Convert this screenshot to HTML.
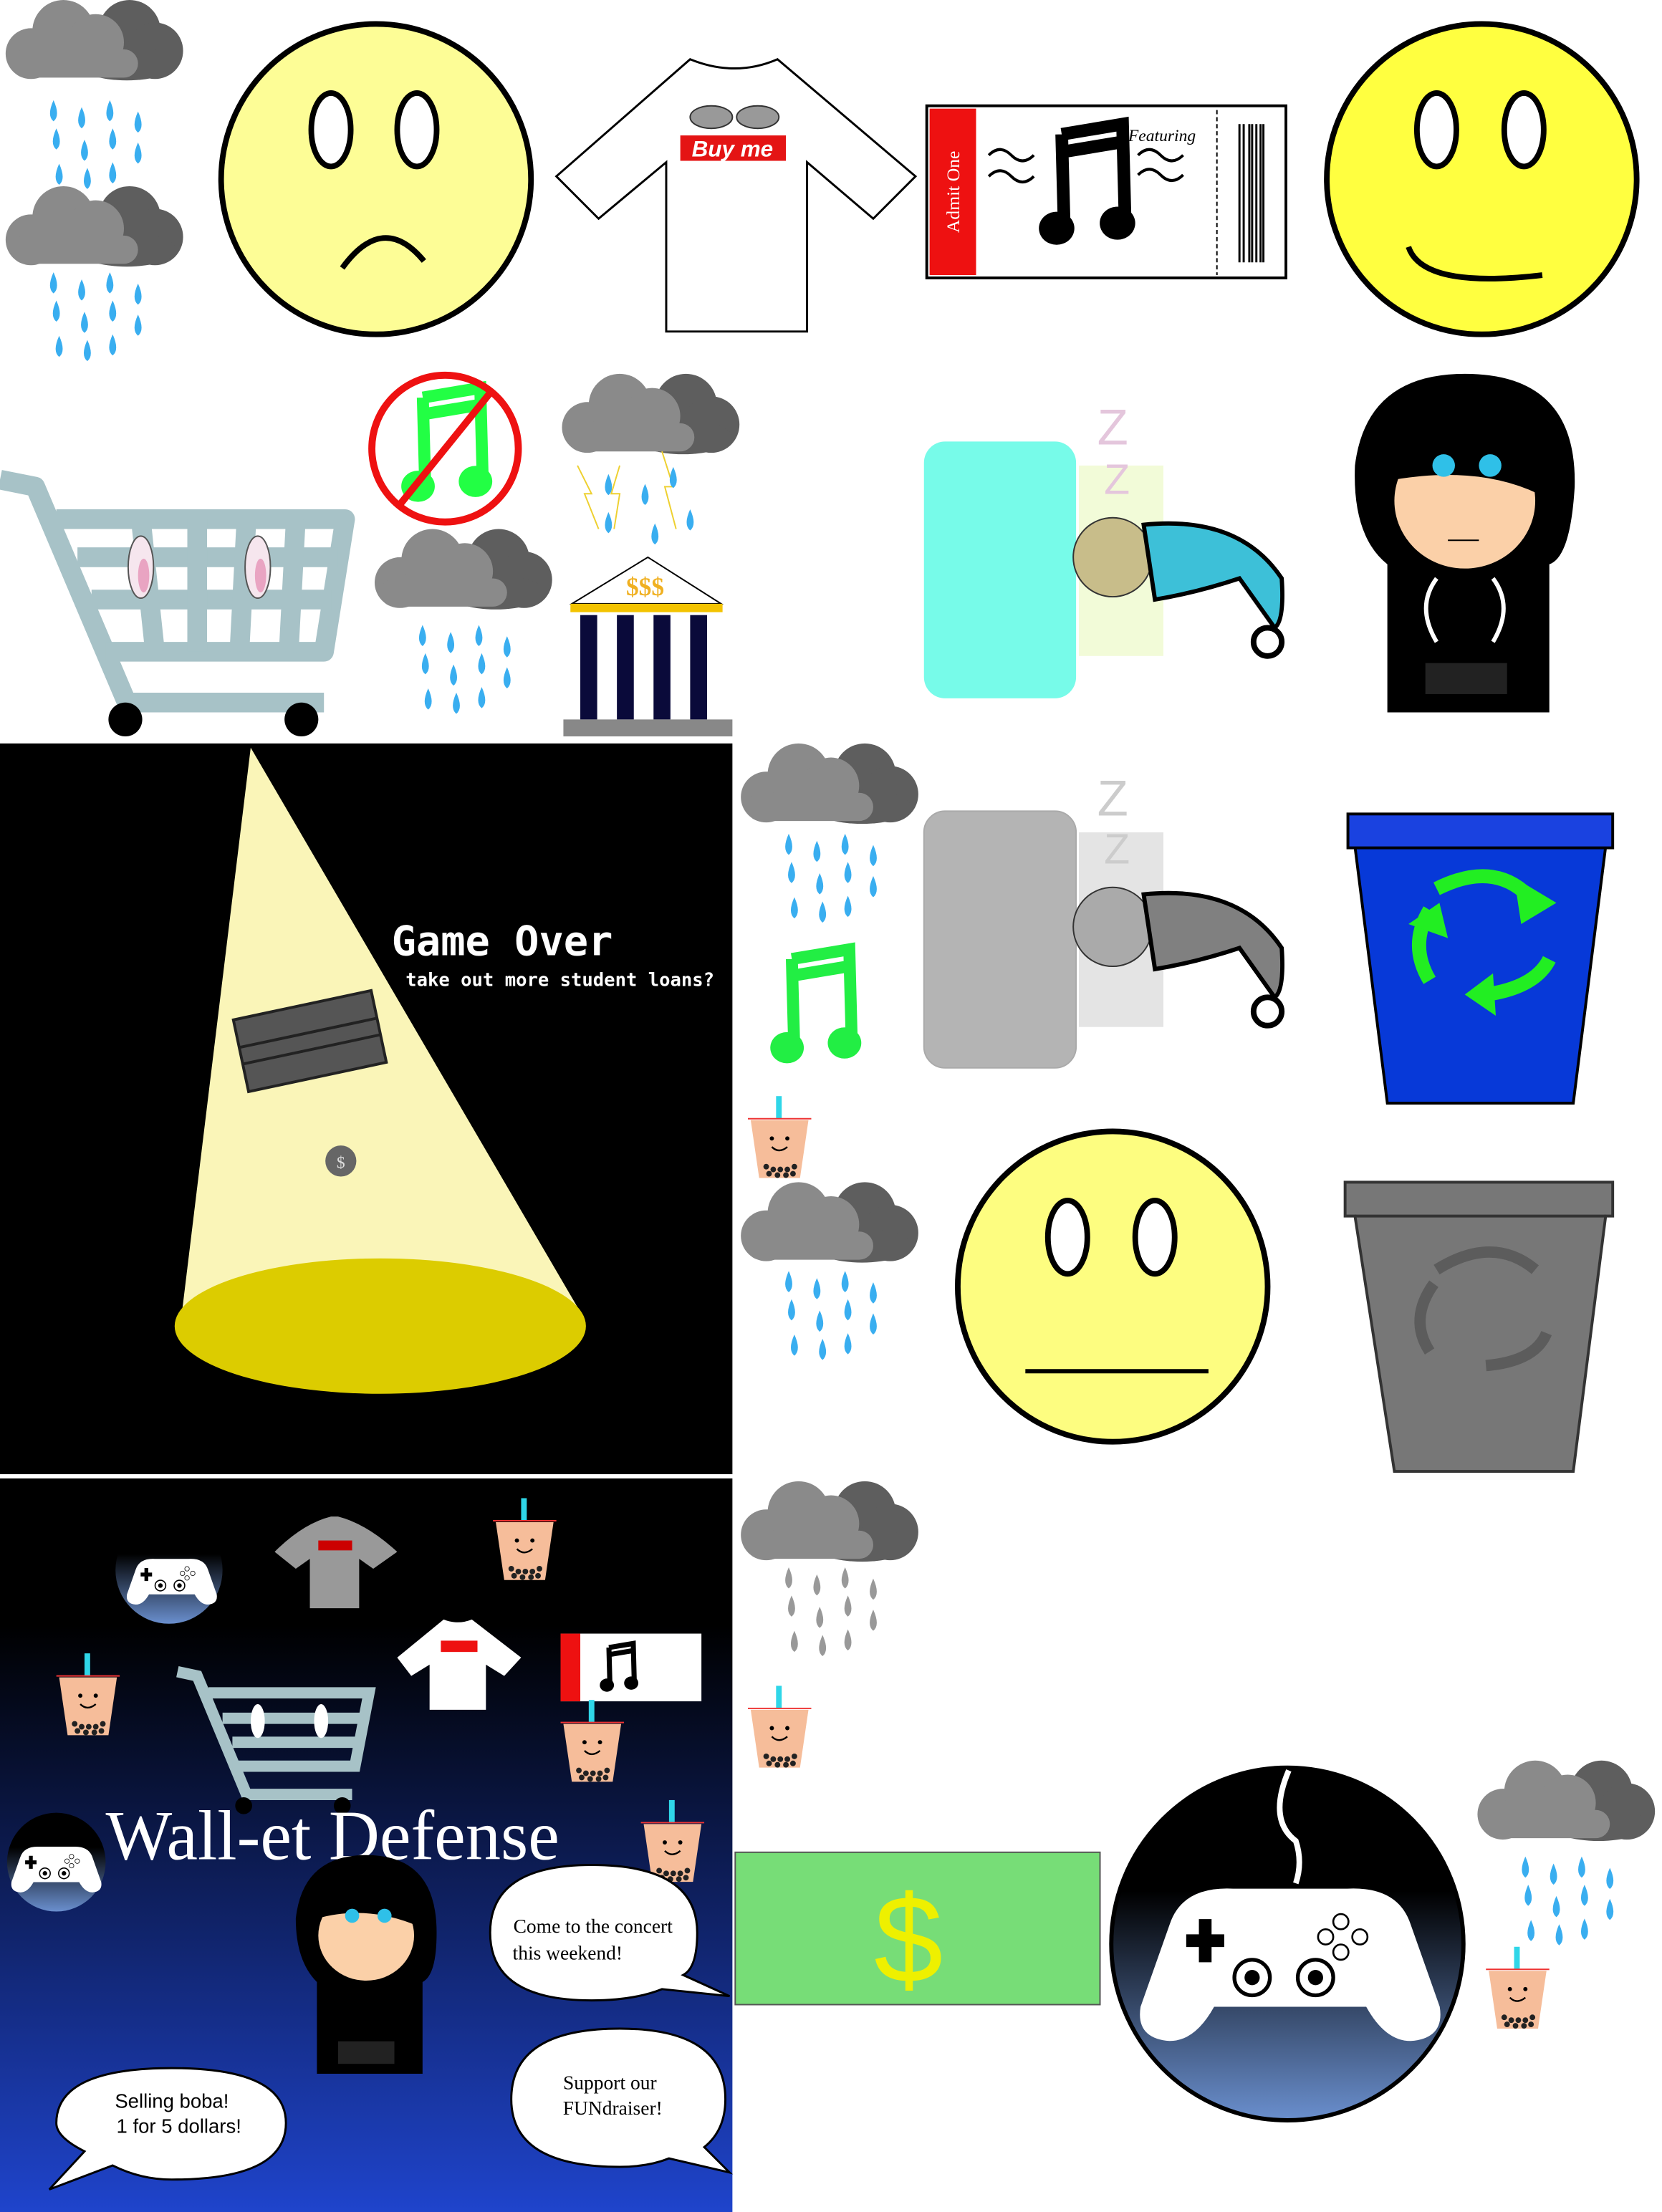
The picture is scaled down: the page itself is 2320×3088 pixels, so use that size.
<!DOCTYPE html>
<html><head><meta charset="utf-8"><style>
html,body{margin:0;padding:0;background:#fff;}
svg{display:block;}
</style></head><body>
<svg width="2320" height="3088" viewBox="0 0 1180 1568" preserveAspectRatio="none" xmlns="http://www.w3.org/2000/svg" style="font-family:'Liberation Serif',serif">
<defs>
<g id="cloud">
 <circle cx="92" cy="22" r="22" fill="#5e5e5e"/>
 <circle cx="110" cy="36" r="20" fill="#5e5e5e"/>
 <ellipse cx="90" cy="45" rx="35" ry="12" fill="#5e5e5e"/>
 <circle cx="22" cy="38" r="18" fill="#8a8a8a"/>
 <circle cx="45" cy="22" r="22" fill="#8a8a8a"/>
 <circle cx="68" cy="30" r="20" fill="#8a8a8a"/>
 <rect x="8" y="35" width="90" height="20" rx="10" fill="#8a8a8a"/>
</g>
<path id="drop" d="M0,-9 Q5,2 0,6 Q-5,2 0,-9Z"/>
<g id="dropsA">
 <use href="#drop" x="38" y="80"/><use href="#drop" x="58" y="85"/><use href="#drop" x="78" y="80"/><use href="#drop" x="98" y="88"/>
 <use href="#drop" x="40" y="100"/><use href="#drop" x="60" y="108"/><use href="#drop" x="80" y="100"/><use href="#drop" x="98" y="110"/>
 <use href="#drop" x="42" y="125"/><use href="#drop" x="62" y="128"/><use href="#drop" x="80" y="124"/>
</g>
<g id="rain" fill="#39aef0"><use href="#dropsA"/></g>
<g id="grayrain" fill="#999"><use href="#dropsA"/></g>
<g id="boba">
 <rect x="20" y="0" width="4" height="16" fill="#2fd6e8"/>
 <line x1="0" y1="16" x2="45" y2="16" stroke="#e33" stroke-width="1"/>
 <path d="M2,17 L43,17 L37,58 L8,58Z" fill="#f6bd9a"/>
 <circle cx="17" cy="30" r="1.5"/><circle cx="28" cy="30" r="1.5"/>
 <path d="M17,36 Q22,41 28,36" fill="none" stroke="#000" stroke-width="1.2"/>
 <g fill="#222"><circle cx="13" cy="50" r="2"/><circle cx="18" cy="52" r="2"/><circle cx="23" cy="52" r="2"/><circle cx="28" cy="52" r="2"/><circle cx="33" cy="50" r="2"/><circle cx="15" cy="55" r="2"/><circle cx="21" cy="56" r="2"/><circle cx="27" cy="56" r="2"/><circle cx="32" cy="55" r="2"/></g>
</g>
<g id="note">
 <path d="M12,8 L60,0 L62,76 M12,8 L14,82 M12,22 L60,14" fill="none" stroke="currentColor" stroke-width="10"/>
 <ellipse cx="8" cy="82" rx="14" ry="13" fill="currentColor"/>
 <ellipse cx="56" cy="78" rx="14" ry="13" fill="currentColor"/>
</g>
<g id="controller">
 <path d="M-95,-20 Q-85,-50 -45,-48 L45,-48 Q85,-50 95,-20 L118,45 Q122,70 95,72 Q75,72 60,45 L-60,45 Q-75,72 -95,72 Q-122,70 -118,45Z" fill="#fff"/>
 <path d="M-82,-12 h10 v-12 h10 v12 h10 v10 h-10 v12 h-10 v-12 h-10Z" fill="#000"/>
 <circle cx="-30" cy="22" r="14" fill="#fff" stroke="#000" stroke-width="3"/><circle cx="-30" cy="22" r="6"/>
 <circle cx="20" cy="22" r="14" fill="#fff" stroke="#000" stroke-width="3"/><circle cx="20" cy="22" r="6"/>
 <g fill="#fff" stroke="#000" stroke-width="1.5"><circle cx="40" cy="-22" r="6"/><circle cx="55" cy="-10" r="6"/><circle cx="40" cy="2" r="6"/><circle cx="28" cy="-10" r="6"/></g>
</g>
<linearGradient id="ctlg" x1="0" y1="0" x2="0" y2="1"><stop offset="0.35" stop-color="#000"/><stop offset="1" stop-color="#6a8fce"/></linearGradient>
<linearGradient id="bg2" x1="0" y1="0" x2="0" y2="1"><stop offset="0.2" stop-color="#000"/><stop offset="1" stop-color="#1f44cc"/></linearGradient>
</defs>

<use href="#cloud" x="0" y="0"/><use href="#rain" x="0" y="0"/>
<use href="#cloud" x="0" y="132"/><use href="#rain" x="0" y="122"/>

<circle cx="267" cy="127" r="110" fill="#fdfd96" stroke="#000" stroke-width="4"/>
<ellipse cx="235" cy="92" rx="14" ry="26" fill="#fff" stroke="#000" stroke-width="4"/>
<ellipse cx="296" cy="92" rx="14" ry="26" fill="#fff" stroke="#000" stroke-width="4"/>
<path d="M243,190 Q272,150 301,185" fill="none" stroke="#000" stroke-width="4"/>

<path d="M490,42 Q522,55 552,42 L650,125 L620,155 L573,115 L573,235 L473,235 L473,115 L425,155 L395,125Z" fill="#fff" stroke="#000" stroke-width="1.5"/>
<ellipse cx="505" cy="83" rx="15" ry="8" fill="#999" stroke="#333"/><ellipse cx="538" cy="83" rx="15" ry="8" fill="#999" stroke="#333"/>
<rect x="483" y="96" width="75" height="18" fill="#e41414"/>
<text x="520" y="111" style="font-family:'Liberation Sans',sans-serif" font-style="italic" font-weight="bold" font-size="16" fill="#fff" text-anchor="middle">Buy me</text>

<rect x="658" y="75" width="255" height="122" fill="#fff" stroke="#000" stroke-width="2"/>
<rect x="660" y="77" width="33" height="118" fill="#ee1111"/>
<text transform="translate(681,136) rotate(-90)" font-size="13" fill="#fff" text-anchor="middle">Admit One</text>
<g color="#000" transform="translate(743,88) scale(0.9)"><use href="#note"/></g>
<path d="M702,110 q8,-8 16,0 t16,0 M702,125 q8,-8 16,0 t16,0 M808,110 q8,-8 16,0 t16,0 M808,124 q8,-8 16,0 t16,0" fill="none" stroke="#000" stroke-width="2"/>
<text x="825" y="100" font-size="12" text-anchor="middle" font-style="italic">Featuring</text>
<line x1="864" y1="78" x2="864" y2="195" stroke="#000" stroke-dasharray="3,2"/>
<g stroke="#000"><path d="M880,88 v98 M883,88 v98 M887,88 v98 M889,88 v98 M892,88 v98 M895,88 v98 M897,88 v98" stroke-width="1.5"/></g>

<circle cx="1052" cy="127" r="110" fill="#ffff40" stroke="#000" stroke-width="4"/>
<ellipse cx="1020" cy="92" rx="14" ry="26" fill="#fff" stroke="#000" stroke-width="4"/>
<ellipse cx="1082" cy="92" rx="14" ry="26" fill="#fff" stroke="#000" stroke-width="4"/>
<path d="M1000,175 Q1010,205 1095,195" fill="none" stroke="#000" stroke-width="4"/>

<g fill="none" stroke="#a7c2c7" stroke-width="14" stroke-linejoin="round">
 <path d="M0,340 L25,345 L90,498 L230,498"/>
 <path d="M40,368 L245,368 L230,462 L75,462"/>
 <path d="M55,395 L240,395 M65,425 L235,425"/>
 <path d="M100,368 L110,462 M140,368 L140,462 M175,368 L170,462 M210,368 L205,462"/>
</g>
<ellipse cx="100" cy="402" rx="9" ry="22" fill="#f6e6ee" stroke="#555"/><ellipse cx="102" cy="408" rx="4" ry="12" fill="#e9a4c2"/>
<ellipse cx="183" cy="402" rx="9" ry="22" fill="#f6e6ee" stroke="#555"/><ellipse cx="185" cy="408" rx="4" ry="12" fill="#e9a4c2"/>
<circle cx="89" cy="510" r="12" fill="#000"/><circle cx="214" cy="510" r="12" fill="#000"/>

<g color="#22ff44" transform="translate(290,275) scale(0.85)"><use href="#note"/></g>
<circle cx="316" cy="318" r="52" fill="none" stroke="#ee1111" stroke-width="5"/>
<line x1="282" y1="360" x2="350" y2="276" stroke="#ee1111" stroke-width="5"/>
<use href="#cloud" x="262" y="375"/><use href="#rain" x="262" y="372"/>
<use href="#cloud" x="395" y="265"/>
<path d="M410,330 l10,20 -5,0 10,25 M470,320 l8,25 -6,0 8,30 M440,330 l-6,20 6,0 -4,25" fill="none" stroke="#eed030" stroke-width="1"/>
<g fill="#39aef0"><use href="#drop" x="432" y="345"/><use href="#drop" x="458" y="352"/><use href="#drop" x="478" y="340"/><use href="#drop" x="432" y="372"/><use href="#drop" x="490" y="370"/><use href="#drop" x="465" y="380"/></g>
<path d="M460,395 L512,428 L406,428Z" fill="#fff" stroke="#000"/>
<text x="458" y="422" font-size="18" fill="#f0b020" text-anchor="middle" font-weight="bold">$$$</text>
<rect x="405" y="428" width="108" height="6" fill="#f3c300"/>
<rect x="405" y="434" width="108" height="78" fill="#fff"/>
<g fill="#0a0a3a"><rect x="412" y="436" width="12" height="74"/><rect x="438" y="436" width="12" height="74"/><rect x="464" y="436" width="12" height="74"/><rect x="490" y="436" width="12" height="74"/></g>
<rect x="400" y="510" width="120" height="12" fill="#888"/>

<rect x="766" y="330" width="60" height="135" fill="#f2fbd8"/>
<rect x="656" y="313" width="108" height="182" rx="15" fill="#77fbe9"/>
<text x="790" y="315" style="font-family:'Liberation Sans',sans-serif" font-size="36" fill="#e4c6dc" text-anchor="middle">Z</text>
<text x="793" y="350" style="font-family:'Liberation Sans',sans-serif" font-size="30" fill="#e4c6dc" text-anchor="middle">Z</text>
<circle cx="790" cy="395" r="28" fill="#c8bd8a" stroke="#333"/>
<path d="M812,372 Q880,365 910,410 Q912,440 905,445 L880,410 Q850,420 820,425Z" fill="#3dc0d8" stroke="#000" stroke-width="3"/>
<circle cx="900" cy="455" r="10" fill="#fff" stroke="#000" stroke-width="4"/>

<path d="M1040,265 Q1120,265 1118,345 Q1115,395 1100,400 L1100,505 L985,505 L985,400 Q960,380 962,330 Q970,265 1040,265Z" fill="#000"/>
<ellipse cx="1040" cy="355" rx="50" ry="48" fill="#fbd0a8"/>
<path d="M990,340 Q1010,290 1090,310 L1092,350 Q1050,330 990,340Z" fill="#000"/>
<circle cx="1025" cy="330" r="8" fill="#2fc0e8"/><circle cx="1058" cy="330" r="8" fill="#2fc0e8"/>
<line x1="1028" y1="383" x2="1050" y2="383" stroke="#000"/>
<rect x="1012" y="470" width="58" height="22" fill="#222"/>
<path d="M1020,410 q-15,20 0,45 M1060,410 q15,20 0,45" fill="none" stroke="#fff" stroke-width="3"/>

<rect x="0" y="527" width="520" height="518" fill="#000"/>
<path d="M178,530 L412,930 L128,940Z" fill="#faf5b8"/>
<ellipse cx="270" cy="940" rx="146" ry="48" fill="#dccc00"/>
<g transform="rotate(-12 220 738)"><rect x="170" y="712" width="100" height="52" fill="#555" stroke="#222" stroke-width="2"/><line x1="170" y1="732" x2="270" y2="732" stroke="#222" stroke-width="2"/><line x1="170" y1="744" x2="270" y2="744" stroke="#222" stroke-width="2"/></g>
<circle cx="242" cy="823" r="11" fill="#666"/><text x="242" y="828" font-size="12" text-anchor="middle" fill="#ddd">$</text>
<text x="278" y="677" style="font-family:'DejaVu Sans Mono','Liberation Mono',monospace" font-weight="bold" font-size="29" fill="#fff">Game Over</text>
<text x="288" y="699" style="font-family:'DejaVu Sans Mono','Liberation Mono',monospace" font-weight="bold" font-size="13" fill="#fff">take out more student loans?</text>

<use href="#cloud" x="522" y="527"/><use href="#rain" x="522" y="520"/>
<g color="#22ee44" transform="translate(552,673) scale(0.85)"><use href="#note"/></g>
<use href="#boba" x="531" y="777"/>
<use href="#cloud" x="522" y="838"/><use href="#rain" x="522" y="830"/>

<rect x="766" y="590" width="60" height="138" fill="#e4e4e4"/>
<rect x="656" y="575" width="108" height="182" rx="15" fill="#b4b4b4" stroke="#aaa"/>
<text x="790" y="578" style="font-family:'Liberation Sans',sans-serif" font-size="36" fill="#ccc" text-anchor="middle">Z</text>
<text x="793" y="612" style="font-family:'Liberation Sans',sans-serif" font-size="30" fill="#ccc" text-anchor="middle">Z</text>
<circle cx="790" cy="657" r="28" fill="#aaa" stroke="#333"/>
<path d="M812,634 Q880,627 910,672 Q912,702 905,707 L880,672 Q850,682 820,687Z" fill="#808080" stroke="#000" stroke-width="3"/>
<circle cx="900" cy="717" r="10" fill="#fff" stroke="#000" stroke-width="4"/>

<path d="M962,600 L1140,600 L1117,782 L985,782Z" fill="#0739d8" stroke="#000" stroke-width="2"/>
<rect x="957" y="577" width="188" height="24" fill="#1a42e0" stroke="#000" stroke-width="2"/>
<g fill="none" stroke="#22ee22" stroke-width="10">
 <path d="M1020,630 Q1060,610 1085,635"/><path d="M1100,680 Q1090,700 1055,705"/><path d="M1015,695 Q1000,670 1015,645"/>
</g>
<g fill="#22ee22"><path d="M1075,622 L1105,640 L1080,655Z"/><path d="M1060,690 L1040,705 L1062,720Z"/><path d="M1000,655 L1022,640 L1028,665Z"/></g>
<path d="M955,838 L1145,838 L1145,862 L1140,862 L1117,1043 L990,1043 L962,862 L955,862Z" fill="#777" stroke="#333" stroke-width="2"/>
<line x1="962" y1="862" x2="1140" y2="862" stroke="#333" stroke-width="2"/>
<g fill="none" stroke="#5c5c5c" stroke-width="8">
 <path d="M1020,900 Q1060,875 1090,900"/><path d="M1098,945 Q1090,965 1055,968"/><path d="M1015,958 Q1000,935 1018,910"/>
</g>

<circle cx="790" cy="912" r="110" fill="#fdfd80" stroke="#000" stroke-width="4"/>
<ellipse cx="758" cy="877" rx="14" ry="26" fill="#fff" stroke="#000" stroke-width="4"/>
<ellipse cx="820" cy="877" rx="14" ry="26" fill="#fff" stroke="#000" stroke-width="4"/>
<line x1="728" y1="972" x2="858" y2="972" stroke="#000" stroke-width="3"/>

<rect x="0" y="1048" width="520" height="520" fill="url(#bg2)"/>
<circle cx="120" cy="1113" r="38" fill="url(#ctlg)"/>
<g transform="translate(122,1118) scale(0.27)"><use href="#controller"/></g>
<path d="M235,1075 Q215,1080 195,1100 L210,1112 L220,1105 L220,1140 L255,1140 L255,1105 L265,1112 L282,1100 Q260,1080 240,1075Z" fill="#999"/>
<rect x="226" y="1092" width="24" height="7" fill="#c00"/>
<use href="#boba" x="350" y="1062"/>
<use href="#boba" x="40" y="1172"/>
<path d="M315,1148 Q325,1152 335,1148 L370,1175 L358,1188 L345,1180 L345,1212 L305,1212 L305,1180 L292,1188 L282,1175Z" fill="#fff"/>
<rect x="313" y="1163" width="26" height="8" fill="#e11"/>
<rect x="398" y="1158" width="100" height="48" fill="#fff"/><rect x="398" y="1158" width="14" height="48" fill="#e11"/>
<g color="#000" transform="translate(428,1165) scale(0.36)"><use href="#note"/></g>
<g fill="none" stroke="#a7c2c7" stroke-width="8">
 <path d="M126,1185 L140,1188 L175,1272 L250,1272"/><path d="M148,1200 L262,1200 L252,1252 L165,1252"/>
 <path d="M158,1218 L258,1218 M165,1235 L255,1235"/>
</g>
<ellipse cx="183" cy="1220" rx="5" ry="12" fill="#fff"/><ellipse cx="228" cy="1220" rx="5" ry="12" fill="#fff"/>
<circle cx="173" cy="1280" r="6" fill="#000"/><circle cx="243" cy="1280" r="6" fill="#000"/>
<use href="#boba" x="398" y="1205"/>
<use href="#boba" x="455" y="1276"/>
<circle cx="40" cy="1320" r="35" fill="url(#ctlg)"/>
<g transform="translate(40,1322) scale(0.27)"><use href="#controller"/></g>
<text x="75" y="1318" font-size="50" fill="#fff">Wall-et Defense</text>
<path d="M260,1315 Q310,1315 310,1370 Q310,1400 300,1405 L300,1470 L225,1470 L225,1405 Q210,1390 210,1360 Q215,1315 260,1315Z" fill="#000"/>
<ellipse cx="260" cy="1372" rx="34" ry="32" fill="#fbd0a8"/>
<path d="M225,1360 Q240,1325 295,1340 L296,1365 Q260,1350 225,1360Z" fill="#000"/>
<circle cx="250" cy="1358" r="5" fill="#2fc0e8"/><circle cx="273" cy="1358" r="5" fill="#2fc0e8"/>
<rect x="240" y="1447" width="40" height="16" fill="#222"/>
<g fill="#fff" stroke="#000" stroke-width="1.5">
 <path d="M420,1322 Q495,1322 495,1370 Q495,1395 485,1400 L518,1415 L470,1410 Q450,1418 420,1418 Q348,1418 348,1370 Q348,1322 420,1322Z"/>
 <path d="M440,1438 Q515,1438 515,1488 Q515,1510 500,1522 L518,1540 L475,1530 Q460,1536 440,1536 Q363,1536 363,1488 Q363,1438 440,1438Z"/>
 <path d="M122,1466 Q203,1466 203,1505 Q203,1545 122,1545 Q100,1545 80,1535 L35,1552 L60,1525 Q40,1515 40,1505 Q40,1466 122,1466Z"/>
</g>
<text x="421" y="1370" font-size="14" text-anchor="middle">Come to the concert</text>
<text x="403" y="1389" font-size="14" text-anchor="middle">this weekend!</text>
<text x="433" y="1481" font-size="14" text-anchor="middle">Support our</text>
<text x="435" y="1499" font-size="14" text-anchor="middle">FUNdraiser!</text>
<text x="122" y="1494" style="font-family:'Liberation Sans',sans-serif" font-size="14" text-anchor="middle">Selling boba!</text>
<text x="127" y="1512" style="font-family:'Liberation Sans',sans-serif" font-size="14" text-anchor="middle">1 for 5 dollars!</text>

<use href="#cloud" x="522" y="1050"/><use href="#grayrain" x="522" y="1040"/>
<use href="#boba" x="531" y="1195"/>
<rect x="522" y="1313" width="259" height="108" fill="#77dd77" stroke="#555"/>
<text x="645" y="1405" style="font-family:'Liberation Sans',sans-serif" font-size="88" fill="#eef000" text-anchor="middle">$</text>
<circle cx="914" cy="1378" r="125" fill="url(#ctlg)" stroke="#000" stroke-width="3"/>
<path d="M915,1255 Q900,1290 920,1305 Q925,1320 920,1335" fill="none" stroke="#fff" stroke-width="4"/>
<g transform="translate(916,1382) scale(0.9)"><use href="#controller"/></g>
<use href="#cloud" x="1045" y="1248"/><use href="#rain" x="1045" y="1245"/>
<use href="#boba" x="1055" y="1380"/>
</svg>
</body></html>
